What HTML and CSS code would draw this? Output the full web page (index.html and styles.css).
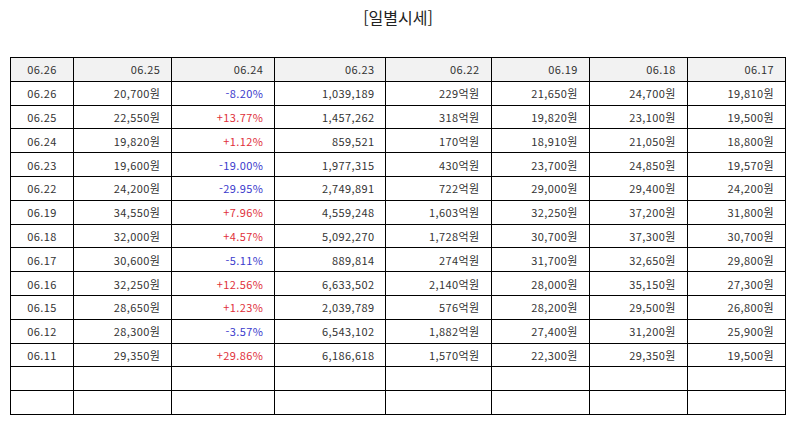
FILE: index.html
```html
<!DOCTYPE html>
<html lang="ko">
<head>
<meta charset="utf-8">
<link rel="stylesheet" href="styles.css">
</head>
<body>
<div class="page">
  <h1 class="title">[일별시세]</h1>
  <table class="prices">
    <colgroup>
      <col class="c1"><col class="c2"><col class="c3"><col class="c4"><col class="c5"><col class="c6"><col class="c7"><col class="c8">
    </colgroup>
    <thead>
      <tr><th>06.26</th><th>06.25</th><th>06.24</th><th>06.23</th><th>06.22</th><th>06.19</th><th>06.18</th><th>06.17</th></tr>
    </thead>
    <tbody>
      <tr><td>06.26</td><td>20,700원</td><td class="down">-8.20%</td><td>1,039,189</td><td>229억원</td><td>21,650원</td><td>24,700원</td><td>19,810원</td></tr>
      <tr><td>06.25</td><td>22,550원</td><td class="up">+13.77%</td><td>1,457,262</td><td>318억원</td><td>19,820원</td><td>23,100원</td><td>19,500원</td></tr>
      <tr><td>06.24</td><td>19,820원</td><td class="up">+1.12%</td><td>859,521</td><td>170억원</td><td>18,910원</td><td>21,050원</td><td>18,800원</td></tr>
      <tr><td>06.23</td><td>19,600원</td><td class="down">-19.00%</td><td>1,977,315</td><td>430억원</td><td>23,700원</td><td>24,850원</td><td>19,570원</td></tr>
      <tr><td>06.22</td><td>24,200원</td><td class="down">-29.95%</td><td>2,749,891</td><td>722억원</td><td>29,000원</td><td>29,400원</td><td>24,200원</td></tr>
      <tr><td>06.19</td><td>34,550원</td><td class="up">+7.96%</td><td>4,559,248</td><td>1,603억원</td><td>32,250원</td><td>37,200원</td><td>31,800원</td></tr>
      <tr><td>06.18</td><td>32,000원</td><td class="up">+4.57%</td><td>5,092,270</td><td>1,728억원</td><td>30,700원</td><td>37,300원</td><td>30,700원</td></tr>
      <tr><td>06.17</td><td>30,600원</td><td class="down">-5.11%</td><td>889,814</td><td>274억원</td><td>31,700원</td><td>32,650원</td><td>29,800원</td></tr>
      <tr><td>06.16</td><td>32,250원</td><td class="up">+12.56%</td><td>6,633,502</td><td>2,140억원</td><td>28,000원</td><td>35,150원</td><td>27,300원</td></tr>
      <tr><td>06.15</td><td>28,650원</td><td class="up">+1.23%</td><td>2,039,789</td><td>576억원</td><td>28,200원</td><td>29,500원</td><td>26,800원</td></tr>
      <tr><td>06.12</td><td>28,300원</td><td class="down">-3.57%</td><td>6,543,102</td><td>1,882억원</td><td>27,400원</td><td>31,200원</td><td>25,900원</td></tr>
      <tr><td>06.11</td><td>29,350원</td><td class="up">+29.86%</td><td>6,186,618</td><td>1,570억원</td><td>22,300원</td><td>29,350원</td><td>19,500원</td></tr>
      <tr class="empty"><td></td><td></td><td></td><td></td><td></td><td></td><td></td><td></td></tr>
      <tr class="empty"><td></td><td></td><td></td><td></td><td></td><td></td><td></td><td></td></tr>
    </tbody>
  </table>
</div>
</body>
</html>
```

FILE: styles.css
```css
html, body {
  margin: 0;
  padding: 0;
  background: #fff;
}
body {
  font-family: "Noto Sans CJK KR", "Noto Sans", sans-serif;
  color: #333;
}
.page {
  padding: 6px 8px 0 10px;
}
.title {
  margin: 0;
  text-align: center;
  font-size: 16px;
  font-weight: 400;
  line-height: 22px;
  color: #222;
}
.prices {
  margin-top: 29px;
  border-collapse: collapse;
  table-layout: fixed;
  width: 776px;
  font-size: 11px;
  letter-spacing: 0.4px;
}
.c1 { width: 63px; }
.c2 { width: 98px; }
.c3 { width: 103px; }
.c4 { width: 111px; }
.c5 { width: 105px; }
.c6 { width: 98px; }
.c7 { width: 98px; }
.c8 { width: 98px; }
.prices th,
.prices td {
  border: 1px solid #000;
  height: 22.8px;
  padding: 0 11px 0 4px;
  text-align: right;
  font-weight: 400;
  line-height: 14px;
  white-space: nowrap;
  color: #333;
}
.prices th {
  background: #f2f2f2;
}
.prices th:first-child,
.prices td:first-child {
  text-align: center;
  padding: 0;
}
.prices td.up { color: #e0303a; }
.prices td.down { color: #3a3acc; }
```
